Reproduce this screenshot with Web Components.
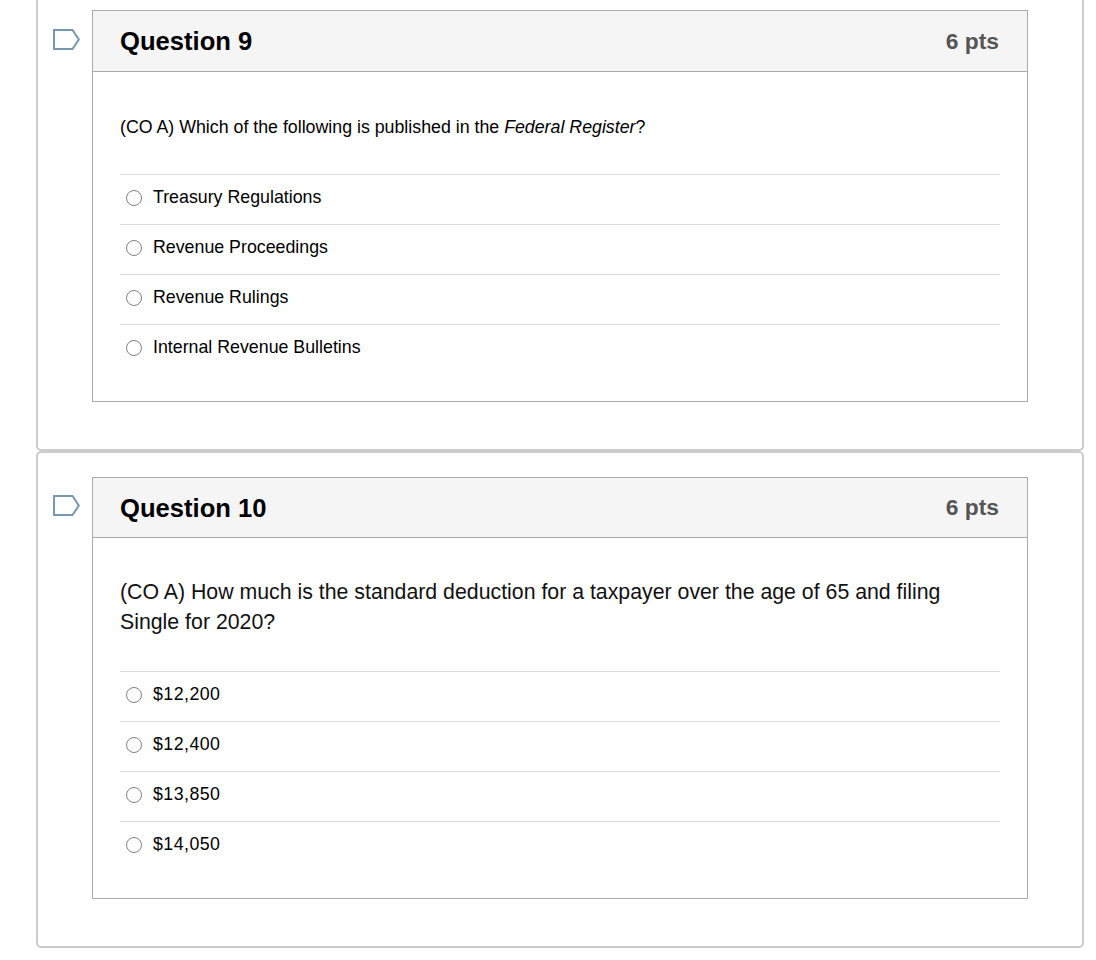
<!DOCTYPE html>
<html>
<head>
<meta charset="utf-8">
<style>
  html, body { margin: 0; padding: 0; background: #fff; }
  body { font-family: "Liberation Sans", Arial, sans-serif; color: #000; }
  #page { display: block; padding-left: 36px; width: 1048px; }
</style>
</head>
<body>
<div id="page">
  <quiz-card first>
    <quiz-question number="9" points="6 pts">
      <span slot="prompt">(CO A) Which of the following is published in the <em>Federal Register</em>?</span>
      <quiz-answer>Treasury Regulations</quiz-answer>
      <quiz-answer>Revenue Proceedings</quiz-answer>
      <quiz-answer>Revenue Rulings</quiz-answer>
      <quiz-answer>Internal Revenue Bulletins</quiz-answer>
    </quiz-question>
  </quiz-card>
  <quiz-card>
    <quiz-question number="10" points="6 pts" large>
      <span slot="prompt">(CO A) How much is the standard deduction for a taxpayer over the age of 65 and filing Single for 2020?</span>
      <quiz-answer money>$12,200</quiz-answer>
      <quiz-answer money>$12,400</quiz-answer>
      <quiz-answer money>$13,850</quiz-answer>
      <quiz-answer money>$14,050</quiz-answer>
    </quiz-question>
  </quiz-card>
</div>

<script>
class QuizCard extends HTMLElement {
  connectedCallback() {
    this.attachShadow({ mode: 'open' });
    this.shadowRoot.innerHTML = `
      <style>
        :host {
          display: block;
          box-sizing: border-box;
          border: 2px solid #cccccc;
          border-radius: 5px;
          padding: 24px 54px 47px 54px;
          background: #fff;
        }
        :host([first]) {
          border-top: 0;
          border-top-left-radius: 0;
          border-top-right-radius: 0;
          padding-top: 10px;
        }
      </style>
      <slot></slot>
    `;
  }
}

class QuizQuestion extends HTMLElement {
  connectedCallback() {
    const number = this.getAttribute('number');
    const points = this.getAttribute('points');
    this.attachShadow({ mode: 'open' });
    this.shadowRoot.innerHTML = `
      <style>
        :host {
          display: block;
          position: relative;
          border: 1px solid #aaaaaa;
          background: #fff;
        }
        .flag {
          position: absolute;
          left: -40px;
          top: 18px;
          width: 27px;
          height: 21px;
        }
        :host([large]) .flag { top: 17px; }
        header {
          display: flex;
          justify-content: space-between;
          align-items: center;
          height: 60px;
          padding: 0 28px 0 27px;
          background: #f5f5f5;
          border-bottom: 1px solid #aaaaaa;
        }
        :host([large]) header { height: 59px; }
        h2 {
          margin: 0;
          font-size: 25.6px;
          line-height: 60px;
          font-weight: 700;
          color: #000;
        }
        .pts {
          font-size: 22.8px;
          font-weight: 700;
          color: #555555;
        }
        .body {
          padding: 40px 27px 27px 27px;
        }
        :host([large]) .body { padding-top: 39px; }
        .prompt {
          font-size: 17.77px;
          line-height: 30px;
          padding-bottom: 32px;
          color: #000;
        }
        :host([large]) .prompt {
          font-size: 21.3px;
          padding-bottom: 34px;
          color: #111;
        }
      </style>
      <svg class="flag" viewBox="0 0 27 21" aria-hidden="true">
        <path d="M1 1H19.5L25.8 10.5L19.5 20H1Z" fill="#fff" stroke="#7799b0" stroke-width="2"/>
      </svg>
      <header>
        <h2>Question ${number}</h2>
        <span class="pts">${points}</span>
      </header>
      <div class="body">
        <div class="prompt"><slot name="prompt"></slot></div>
        <slot></slot>
      </div>
    `;
  }
}

class QuizAnswer extends HTMLElement {
  connectedCallback() {
    this.attachShadow({ mode: 'open' });
    this.shadowRoot.innerHTML = `
      <style>
        :host {
          display: flex;
          align-items: center;
          height: 50px;
          box-sizing: border-box;
          padding-bottom: 4px;
          border-top: 1px solid #dddddd;
          font-size: 17.8px;
          color: #000;
        }
        :host([money]) { letter-spacing: 0.45px; }
        .radio {
          box-sizing: border-box;
          width: 16px;
          height: 16px;
          margin-left: 6px;
          margin-right: 11px;
          border: 1.5px solid #808080;
          border-radius: 50%;
          background: #fff;
        }
      </style>
      <span class="radio"></span>
      <span><slot></slot></span>
    `;
  }
}

customElements.define('quiz-card', QuizCard);
customElements.define('quiz-question', QuizQuestion);
customElements.define('quiz-answer', QuizAnswer);
</script>
</body>
</html>
